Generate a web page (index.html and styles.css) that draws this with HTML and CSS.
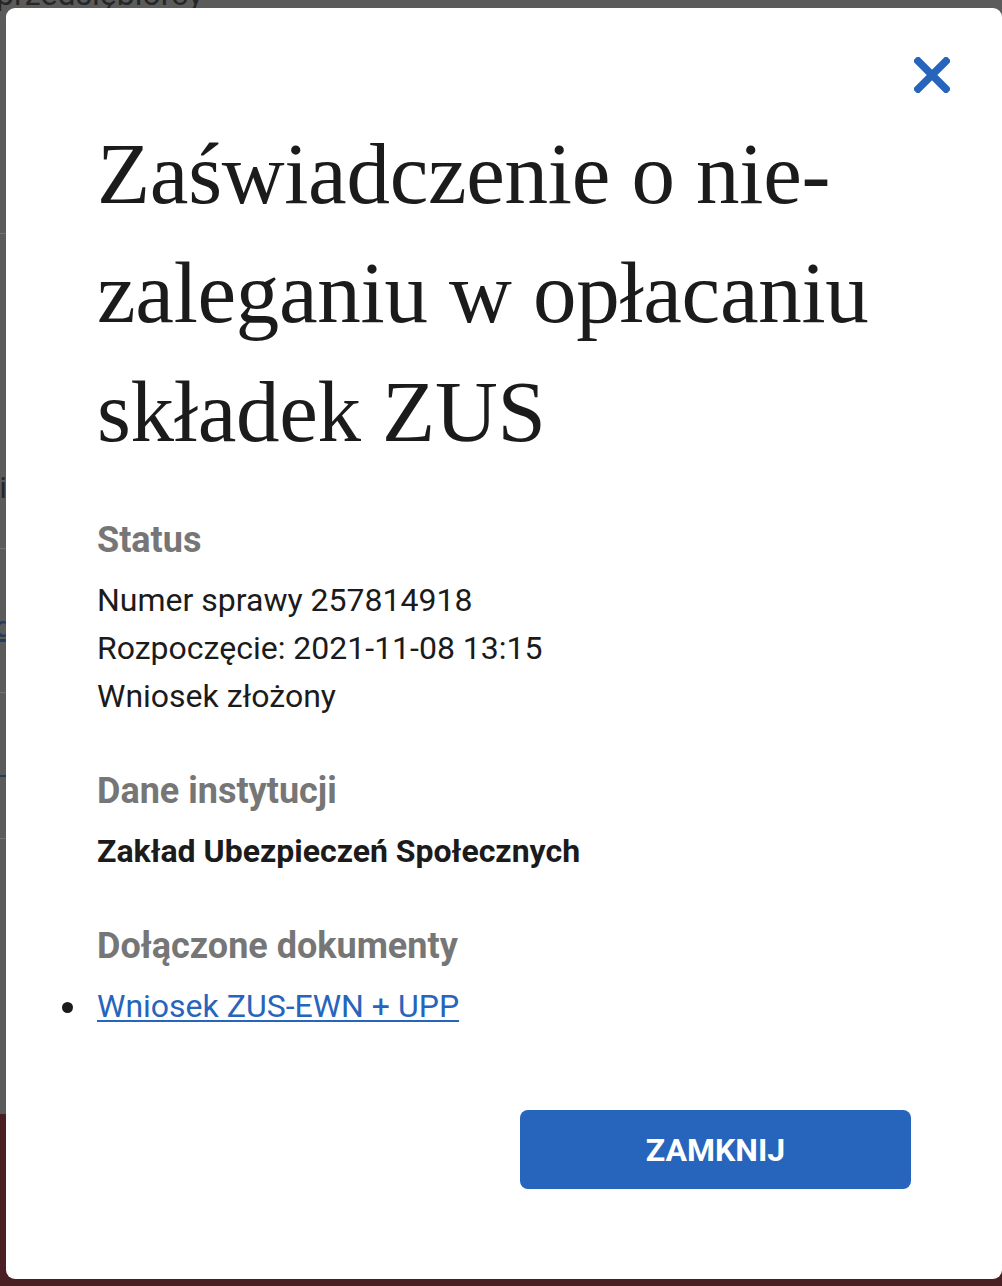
FILE: index.html
```html
<!DOCTYPE html>
<html lang="pl">
<head>
<meta charset="utf-8">
<title>Zaświadczenie o niezaleganiu</title>
<link rel="stylesheet" href="styles.css">
</head>
<body>
<div class="page">
  <div class="bg-title">przedsiębiorcy</div>
  <div class="bg-row bg-row-a"><span class="bg-link">Usługi</span></div>
  <div class="bg-row bg-row-b"><span class="bg-text">Pozwoli</span></div>
  <div class="bg-row bg-row-c"><span class="bg-link">Sprawdź</span></div>
  <div class="bg-row bg-row-d"><span class="bg-line"></span></div>
  <div class="bg-spacer"></div>
  <footer class="bg-footer"></footer>
</div>

<div class="modal" role="dialog" aria-labelledby="modal-title">
  <div class="modal-top">
    <button class="close" aria-label="Zamknij">
      <svg viewBox="0 0 36 36" width="36" height="36" aria-hidden="true">
        <path d="M4 4 L32 32 M32 4 L4 32" stroke="#2764bb" stroke-width="7.5" stroke-linecap="square" fill="none"/>
      </svg>
    </button>
  </div>
  <h1 id="modal-title" class="title">Zaświadczenie o nie-<br>zaleganiu w opłacaniu<br>składek ZUS</h1>

  <section class="section first">
    <h2 class="label">Status</h2>
    <p class="line">Numer sprawy 257814918</p>
    <p class="line">Rozpoczęcie: 2021-11-08 13:15</p>
    <p class="line">Wniosek złożony</p>
  </section>

  <section class="section">
    <h2 class="label">Dane instytucji</h2>
    <p class="line strong">Zakład Ubezpieczeń Społecznych</p>
  </section>

  <section class="section">
    <h2 class="label">Dołączone dokumenty</h2>
    <ul class="docs">
      <li class="doc"><a href="#" class="doc-link">Wniosek ZUS-EWN + UPP</a></li>
    </ul>
  </section>

  <div class="actions">
    <button class="btn-close">ZAMKNIJ</button>
  </div>
</div>
</body>
</html>
```

FILE: styles.css
```css
html, body {
  margin: 0;
  padding: 0;
}

body {
  background: #5b5b5b;
  font-family: Roboto, "Liberation Sans", Arial, sans-serif;
  overflow: hidden;
  height: 1286px;
}

/* background page (dimmed by overlay) */
.page {
  display: flex;
  flex-direction: column;
  height: 1286px;
}

.bg-title {
  font-size: 32px;
  line-height: 32px;
  color: #262626;
  margin-top: -22px;
  margin-left: -4px;
  white-space: nowrap;
}

.bg-row {
  display: flex;
  align-items: flex-start;
  border-bottom: 1px solid #727272;
  box-sizing: border-box;
  flex: none;
}

.bg-row-a { height: 224px; padding-top: 160px; }
.bg-row-b { height: 315px; padding-top: 236px; }
.bg-row-c { height: 144px; padding-top: 60px; }
.bg-row-d { height: 146px; padding-top: 82px; }

.bg-link {
  font-size: 30px;
  color: #243b5e;
  margin-left: -88px;
  text-decoration: underline;
}

.bg-text {
  font-size: 30px;
  color: #262626;
  margin-left: -98px;
}

.bg-line {
  display: block;
  width: 6px;
  height: 2px;
  background: #243b5e;
}

.bg-spacer { height: 275px; flex: none; }

.bg-footer {
  flex: 1;
  background: #4a1f23;
}

/* modal */
.modal {
  position: fixed;
  left: 6px;
  top: 8px;
  width: 996px;
  height: 1271px;
  box-sizing: border-box;
  background: #ffffff;
  border-radius: 9px;
  padding: 0 91px 0 91px;
  display: flex;
  flex-direction: column;
}

.modal-top {
  display: flex;
  justify-content: flex-end;
  padding-top: 49px;
  margin-right: -39px;
}

.close {
  width: 36px;
  height: 36px;
  padding: 0;
  border: 0;
  background: none;
  cursor: pointer;
  display: block;
}

.close svg { display: block; }

.title {
  margin: 21px 0 0 0;
  font-family: "Liberation Serif", "DejaVu Serif", serif;
  font-weight: 400;
  font-size: 87px;
  line-height: 119px;
  color: #1b1b1b;
  white-space: nowrap;
  letter-spacing: -0.3px;
}

.section {
  margin-top: 44px;
}

.section + .section {
  margin-top: 46px;
}

.label {
  margin: 0 0 10px 0;
  font-size: 36px;
  line-height: 51px;
  font-weight: 700;
  color: #767676;
}

.line {
  margin: 0;
  font-size: 32px;
  line-height: 48px;
  color: #1b1b1b;
}

.strong { font-weight: 700; }

.docs {
  margin: 0;
  padding: 0;
  list-style: none;
  font-size: 32px;
  line-height: 48px;
  color: #1b1b1b;
}

.doc {
  display: flex;
  align-items: center;
}

.doc::before {
  content: "";
  width: 11px;
  height: 11px;
  border-radius: 50%;
  background: #1b1b1b;
  margin-left: -35px;
  margin-right: 24px;
  margin-top: 2px;
  flex: none;
}

.doc-link {
  color: #2764bb;
  text-decoration: underline;
  text-underline-offset: 3px;
  text-decoration-thickness: 2px;
}

.actions {
  display: flex;
  justify-content: flex-end;
  margin-top: 80px;
}

.btn-close {
  width: 391px;
  height: 79px;
  border: 0;
  border-radius: 8px;
  background: #2764bb;
  color: #ffffff;
  font-family: Roboto, "Liberation Sans", Arial, sans-serif;
  font-size: 32px;
  font-weight: 700;
  cursor: pointer;
}
```
